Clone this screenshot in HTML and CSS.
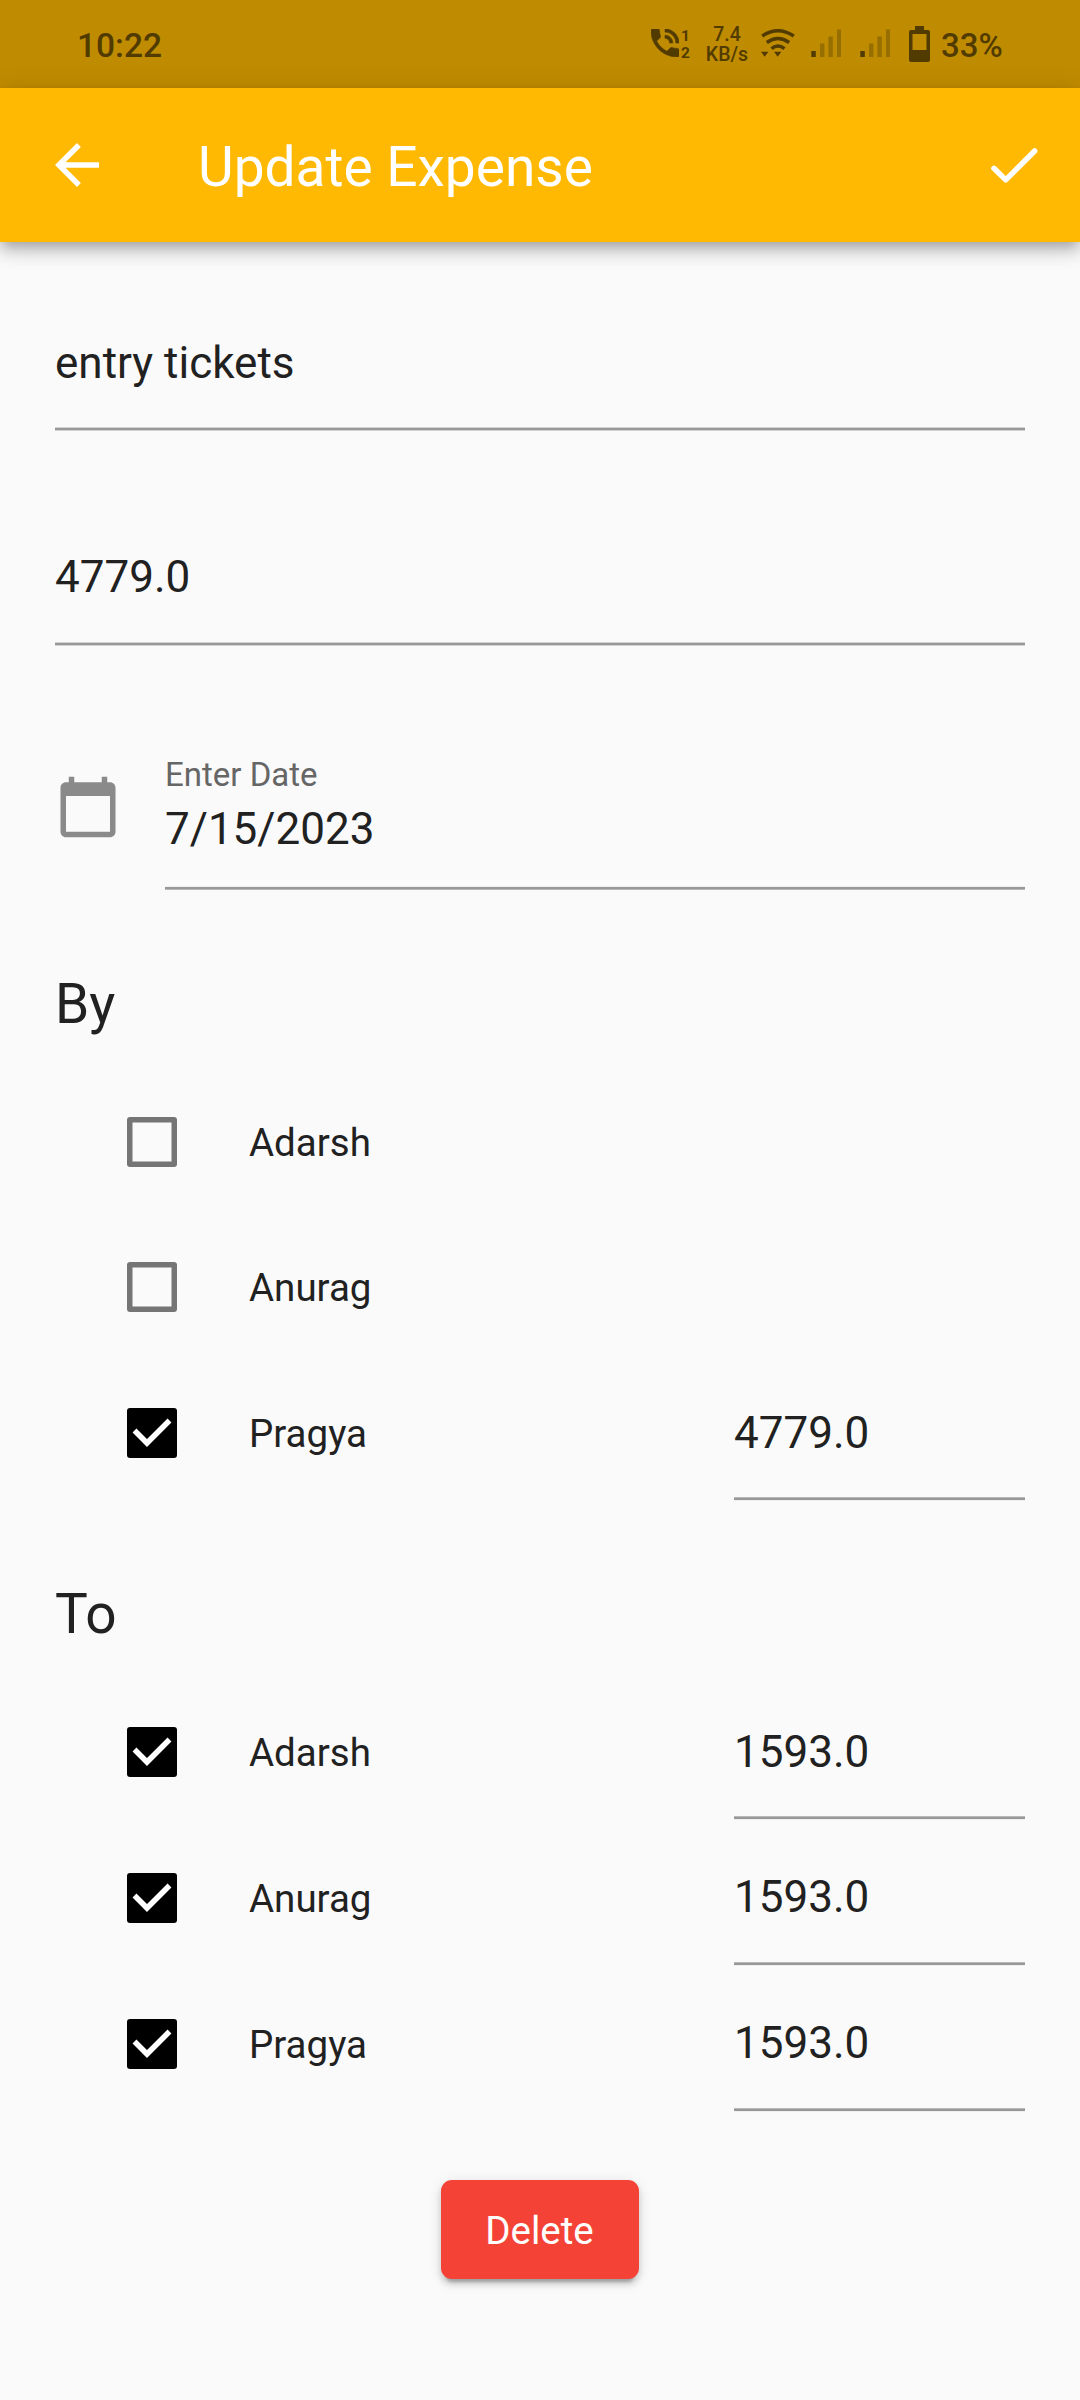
FILE: index.html
```html
<!DOCTYPE html>
<html lang="en">
<head>
<meta charset="utf-8">
<title>Update Expense</title>
<link rel="stylesheet" href="styles.css">
</head>
<body>
<svg class="sprite" aria-hidden="true">
  <symbol id="tick" viewBox="0 0 18 18"><path d="M2.7 8.1 7.2 12.6 15.3 4.5" fill="none" stroke="#fff" stroke-width="2"/></symbol>
  <symbol id="signal" viewBox="0 0 30 28">
    <path d="M.3 22h4.500v6H.3z"/><path opacity=".36" d="M9 14.500h4.400V28H9zM17.400 7.500h4.400V28h-4.400zM26 .5h4V28h-4z"/>
  </symbol>
</svg>
<header class="status">
  <time class="clock">10:22</time>
  <div class="status-icons">
    <div class="call">
      <svg width="28" height="28" viewBox="3 3 18 18"><path d="M20 15.500c-1.250 0-2.450-.2-3.570-.57-.1-.03-.21-.05-.31-.05-.26 0-.51.1-.71.29l-2.200 2.200c-2.830-1.440-5.150-3.750-6.590-6.590l2.200-2.210c.28-.26.36-.65.25-1C8.700 6.450 8.500 5.250 8.500 4c0-.55-.45-1-1-1H4c-.55 0-1 .45-1 1 0 9.390 7.610 17 17 17 .55 0 1-.45 1-1v-3.500c0-.55-.45-1-1-1zM19 12h2c0-4.970-4.030-9-9-9v2c3.870 0 7 3.130 7 7zm-4 0h2c0-2.760-2.240-5-5-5v2c1.660 0 3 1.340 3 3z" stroke="currentColor" stroke-width=".4"/></svg>
      <div class="sims"><span>1</span><span>2</span></div>
    </div>
    <div class="speed"><span>7.4</span><span>KB/s</span></div>
    <svg class="wifi" width="34" height="29" viewBox="0 0 34 29"><path d="M1.200 7Q17-3.500 32.800 7M5.800 13.500Q17 5.500 28.200 13.500M10.500 19.700Q17 14.500 23.500 19.700" fill="none" stroke="currentColor" stroke-width="3.400"/><path d="M0 22.800h7.400l-3.700 5zM13 22.800h7.400l-3.700 5z"/></svg>
    <svg class="bars" width="30" height="28"><use href="#signal"/></svg>
    <svg class="bars" width="30" height="28"><use href="#signal"/></svg>
    <svg class="battery" width="21" height="36" viewBox="0 0 21 36"><path fill-rule="evenodd" d="M6 0h9v4h4q2 0 2 2v28q0 2-2 2H2q-2 0-2-2V6q0-2 2-2h4zM3.500 8v16h14V8z"/></svg>
    <span class="percent">33%</span>
  </div>
</header>
<div class="appbar">
  <svg class="back" width="66" height="66" viewBox="0 0 24 24"><path d="M20 11H7.830l5.590-5.590L12 4l-8 8 8 8 1.410-1.410L7.830 13H20v-2z"/></svg>
  <h1 class="title">Update Expense</h1>
  <svg class="save" width="66" height="66" viewBox="0 0 24 24"><path d="M4.700 13.200 9 17.400 19.500 6.900" fill="none" stroke="currentColor" stroke-width="2" stroke-linecap="round" stroke-linejoin="round"/></svg>
</div>
<main class="form">
  <div class="field name">entry tickets</div>
  <div class="field total">4779.0</div>
  <div class="date-row">
    <svg class="calendar" width="66" height="66" viewBox="0 0 24 24"><path d="M20 3h-1V1h-2v2H7V1H5v2H4c-1.100 0-2 .9-2 2v16c0 1.100.9 2 2 2h16c1.100 0 2-.9 2-2V5c0-1.100-.9-2-2-2zm0 18H4V8h16v13z"/></svg>
    <div class="date"><span class="label">Enter Date</span><div class="field day">7/15/2023</div></div>
  </div>
  <section class="group payers">
    <h2 class="heading">By</h2>
    <div class="person"><i class="box"></i><span class="who">Adarsh</span></div>
    <div class="person"><i class="box"></i><span class="who">Anurag</span></div>
    <div class="person"><i class="box on"><svg width="50" height="50"><use href="#tick"/></svg></i><span class="who">Pragya</span><div class="field share">4779.0</div></div>
  </section>
  <section class="group receivers">
    <h2 class="heading">To</h2>
    <div class="person"><i class="box on"><svg width="50" height="50"><use href="#tick"/></svg></i><span class="who">Adarsh</span><div class="field share">1593.0</div></div>
    <div class="person"><i class="box on"><svg width="50" height="50"><use href="#tick"/></svg></i><span class="who">Anurag</span><div class="field share">1593.0</div></div>
    <div class="person"><i class="box on"><svg width="50" height="50"><use href="#tick"/></svg></i><span class="who">Pragya</span><div class="field share">1593.0</div></div>
  </section>
  <button class="delete">Delete</button>
</main>
</body>
</html>
```
FILE: styles.css
```css
* { box-sizing: border-box; }
body { margin: 0; min-height: 2400px; background: #fafafa; color: #212121; font-family: Roboto, sans-serif; }
svg { display: block; flex: none; fill: currentColor; }
.sprite { width: 0; height: 0; position: absolute; }

.status { height: 88px; padding: 0 77px; display: flex; justify-content: space-between; background: #bf8b01; color: #513b00; }
.clock { font-size: 33.500px; font-weight: 500; line-height: 40px; padding-top: 26px; }
.status-icons { display: flex; align-items: flex-start; }
.call { display: flex; gap: 2px; padding-top: 29px; }
.sims { display: flex; flex-direction: column; width: 10px; margin-top: -1px; font-size: 15.500px; font-weight: 700; line-height: 16.500px; }
.speed { display: flex; flex-direction: column; align-items: center; width: 42px; margin-left: 15px; padding-top: 25px; font-size: 19.500px; font-weight: 500; line-height: 20px; }
.wifi { margin: 29px 0 0 13px; }
.bars { margin: 29px 0 0 16px; }
.bars + .bars { margin-left: 19px; }
.battery { margin: 26px 0 0 19px; }
.percent { width: 62px; margin-left: 11px; padding-top: 26px; font-size: 33px; font-weight: 500; line-height: 40px; white-space: nowrap; }

.appbar { height: 154px; padding: 0 33px 0 44px; display: flex; align-items: center; background: #ffb902; color: #fff; box-shadow: 0 5px 11px -3px rgba(0,0,0,.2), 0 11px 14px rgba(0,0,0,.14), 0 3px 27px rgba(0,0,0,.12); }
.title { margin: 3px auto 0 88px; font-size: 55px; font-weight: 400; line-height: 64px; }

.form { padding: 89px 55px 0; display: flex; flex-direction: column; }
/* The underline is a hairline with softened outer rows. */
.field {
  --above: #d2d2d2;
  --below: #d2d2d2;
  height: 100px;
  padding-top: 6px;
  font-size: 44px;
  line-height: 52px;
  background: linear-gradient(var(--above) 1px, #989898 1px 3px, var(--below) 3px) bottom / 100% 4px no-repeat;
}
.total { margin-top: 115px; padding-top: 5px; }
.date-row { margin-top: 110px; display: flex; gap: 44px; }
.calendar { color: #8a8a8a; margin-top: 18px; }
.date { flex: 1; display: flex; flex-direction: column; }
.label { font-size: 33px; line-height: 38px; color: #666; }
.day { --above: #efefef; --below: #b8b8b8; height: 96px; padding-top: 9px; }

.group { display: flex; flex-direction: column; }
.payers { margin-top: 82px; }
.receivers { margin-top: 76px; }
.heading { margin: 0 0 33px; font-size: 55px; font-weight: 400; line-height: 64px; }
.person { height: 146px; padding-left: 72px; display: flex; align-items: flex-start; }
.payers .heading + .person { height: 145px; }
.box { flex: none; width: 50px; height: 50px; margin-top: 48px; border-radius: 3px; box-shadow: inset 0 0 0 5.500px #757575; }
.on { background: #000; box-shadow: none; }
.who { margin: 52px auto 0 72px; font-size: 38.500px; line-height: 44px; }
.share { --above: #b8b8b8; --below: #efefef; width: 291px; margin-top: 41px; }
.receivers .person + .person .share { padding-top: 5px; }
.delete { align-self: center; width: 198px; height: 99px; margin-top: 63px; padding: 3px 1px 0 0; border: 0; border-radius: 11px; background: #f44336; color: #fff; font: 38.500px/44px Roboto, sans-serif; box-shadow: 0 8px 3px -5px rgba(0,0,0,.2), 0 5px 6px rgba(0,0,0,.14), 0 3px 14px rgba(0,0,0,.12); }
```
